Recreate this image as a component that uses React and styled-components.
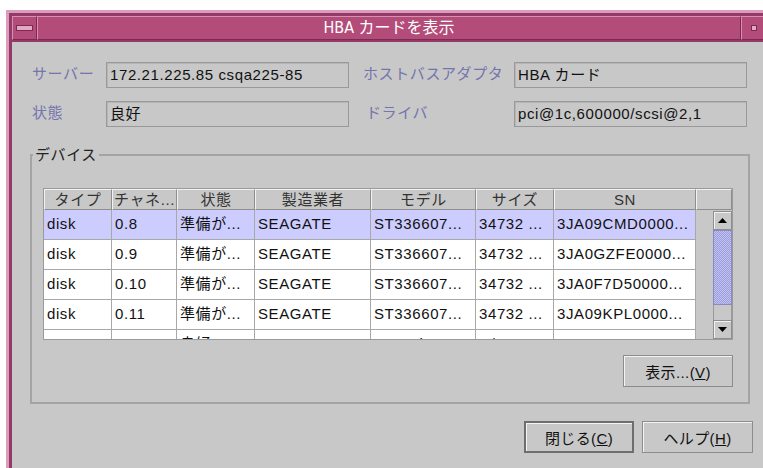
import React from 'react';
import styled, { createGlobalStyle } from 'styled-components';

const GlobalStyle = createGlobalStyle`
  html, body {
    margin: 0;
    padding: 0;
    background: #ffffff;
    overflow: hidden;
  }
  body {
    font-family: "Liberation Sans", "Noto Sans CJK JP", sans-serif;
  }
`;

// Window frame
const Frame = styled.div`
  margin: 10px 0 0 6px;
  width: 770px;
  height: 470px;
  padding: 3px 0 0 3px;
  background: #dc9cbc;
  box-sizing: border-box;
`;

const FrameInner = styled.div`
  height: 100%;
  padding: 3px 0 0 3px;
  background: #943a68;
  box-sizing: border-box;
  display: flex;
  flex-direction: column;
`;

const TitleBar = styled.div`
  display: flex;
  height: 24px;
  margin-bottom: 2px;
  background: #b34c78;
`;

const TitleButton = styled.div`
  width: ${props => props.width}px;
  box-sizing: border-box;
  display: flex;
  align-items: center;
  justify-content: ${props => props.align || 'center'};
  padding-left: ${props => props.pad || 0}px;
  border-top: 1px solid #d98fb0;
  border-left: 1px solid #d98fb0;
  border-right: 1px solid #7d2a52;
  border-bottom: 1px solid #7d2a52;
`;

const MinusIcon = styled.span`
  width: 15px;
  height: 4px;
  background: #e3a8c4;
  border: 1px solid #7d2a52;
`;

const SquareIcon = styled.span`
  width: 4px;
  height: 4px;
  background: #e3a8c4;
  border: 1px solid #7d2a52;
`;

const Title = styled.div`
  flex: 1;
  text-align: center;
  color: #ffffff;
  font-family: "DejaVu Sans Condensed", "Noto Sans CJK JP", sans-serif;
  font-size: 16px;
  line-height: 22px;
  border-top: 1px solid #d98fb0;
  border-left: 1px solid #d98fb0;
  border-right: 1px solid #7d2a52;
  border-bottom: 1px solid #7d2a52;
`;

// Content
const Content = styled.div`
  flex: 1;
  background: #c8c8c8;
  padding-top: 20px;
  display: flex;
  flex-direction: column;
  font-size: 15px;
  letter-spacing: 0.6px;
`;

const FieldGrid = styled.div`
  display: grid;
  grid-template-columns: 74px 243px 165px 233px;
  row-gap: 13px;
  margin-left: 20px;
`;

const Label = styled.div`
  color: #7474ae;
  line-height: 24px;
  height: 26px;
  padding-left: ${props => props.indent || 0}px;
  white-space: nowrap;
`;

const Field = styled.div`
  height: 26px;
  box-sizing: border-box;
  border: 1px solid #999999;
  box-shadow: inset 1px 1px 0 #b6b6b6;
  padding-left: 3px;
  line-height: 24px;
  color: #111111;
  white-space: nowrap;
  overflow: hidden;
`;

const Group = styled.fieldset`
  margin: 18px 0 0 18px;
  width: 720px;
  box-sizing: border-box;
  border: 2px solid #a4a4a4;
  padding: 23px 15px 15px 11px;
  display: flex;
  flex-direction: column;
  align-items: flex-end;
`;

const Legend = styled.legend`
  margin-left: -10px;
  padding: 0 2px;
  line-height: 20px;
  height: 20px;
  color: #222222;
`;

// Table
const Pane = styled.div`
  width: 690px;
  height: 152px;
  box-sizing: border-box;
  border: 1px solid #9a9a9a;
  display: grid;
  grid-template-columns: 1fr 19px;
  grid-template-rows: 21px 1fr;
`;

const HeaderRow = styled.div`
  grid-column: 1 / 3;
  display: flex;
`;

const HeaderCell = styled.div`
  width: ${props => props.w}px;
  flex: ${props => (props.fill ? 1 : 'none')};
  box-sizing: border-box;
  background: #c8c8c8;
  border-left: 1px solid #f2f2f2;
  border-top: 1px solid #f2f2f2;
  border-right: 1px solid #8e8e8e;
  border-bottom: 1px solid #8e8e8e;
  text-align: center;
  line-height: 19px;
  color: #333333;
  white-space: nowrap;
  overflow: hidden;
`;

const Viewport = styled.div`
  overflow: hidden;
  background: #c8c8c8;
`;

const Row = styled.div`
  display: flex;
  height: 30px;
  background: ${props => (props.selected ? '#ccccff' : '#ffffff')};
  width: 652px;
`;

const Cell = styled.div`
  width: ${props => props.w}px;
  box-sizing: border-box;
  border-right: 1px solid #a8a8a8;
  border-bottom: 1px solid #a8a8a8;
  padding-left: 3px;
  line-height: 27px;
  color: #111111;
  white-space: nowrap;
  overflow: hidden;
`;

const ScrollBar = styled.div`
  display: flex;
  flex-direction: column;
  padding-top: 1px;
  background: #c8c8c8;
`;

const ScrollButton = styled.div`
  height: 19px;
  box-sizing: border-box;
  border: 1px solid #8e8e8e;
  box-shadow: inset 1px 1px 0 #f2f2f2;
  display: flex;
  align-items: center;
  justify-content: center;
`;

const Thumb = styled.div`
  height: 75px;
  box-sizing: border-box;
  border: 1px solid #8a8ac0;
  background: repeating-conic-gradient(#c4c4f4 0 25%, #9c9cd8 0 50%) 0 0 / 2px 2px;
`;

const Track = styled.div`
  flex: 1;
  border-left: 1px solid #9a9a9a;
  border-right: 1px solid #9a9a9a;
`;

const Button = styled.button`
  width: ${props => props.w}px;
  height: 32px;
  box-sizing: border-box;
  background: #c8c8c8;
  border: ${props => (props.focused ? '2px solid #6e6e6e' : '1px solid #8c8c8c')};
  box-shadow: inset 1px 1px 0 #f4f4f4;
  font-family: "Liberation Sans", "Noto Sans CJK JP", sans-serif;
  font-size: 15px;
  letter-spacing: 0.4px;
  color: #111111;
  padding: 0;
  cursor: default;

  u {
    text-decoration: underline;
  }
`;

const ViewButton = styled(Button)`
  margin-top: 15px;
`;

const ButtonRow = styled.div`
  display: flex;
  justify-content: flex-end;
  gap: 8px;
  margin: 17px 23px 0 0;
`;

const columns = [
  { name: 'タイプ', w: 68 },
  { name: 'チャネ...', w: 65 },
  { name: '状態', w: 78 },
  { name: '製造業者', w: 116 },
  { name: 'モデル', w: 105 },
  { name: 'サイズ', w: 78 },
  { name: 'SN', w: 142 },
];

const rows = [
  ['disk', '0.8', '準備が...', 'SEAGATE', 'ST336607...', '34732 ...', '3JA09CMD0000...'],
  ['disk', '0.9', '準備が...', 'SEAGATE', 'ST336607...', '34732 ...', '3JA0GZFE0000...'],
  ['disk', '0.10', '準備が...', 'SEAGATE', 'ST336607...', '34732 ...', '3JA0F7D50000...'],
  ['disk', '0.11', '準備が...', 'SEAGATE', 'ST336607...', '34732 ...', '3JA09KPL0000...'],
  ['SES', '0.5', '良好', 'SUN', 'StorEdge...', 'N/A', '000170...'],
];

const Arrow = ({ down }) => (
  <svg width="9" height="5" viewBox="0 0 9 5">
    <path d={down ? 'M0 0 H9 L4.5 5 Z' : 'M0 5 H9 L4.5 0 Z'} fill="#000" />
  </svg>
);

const App = () => {
  return (
    <>
      <GlobalStyle />
      <Frame>
        <FrameInner>
          <TitleBar>
            <TitleButton width={25}>
              <MinusIcon />
            </TitleButton>
            <Title>HBA カードを表示</Title>
            <TitleButton width={35} align="flex-start" pad={9}>
              <SquareIcon />
            </TitleButton>
          </TitleBar>

          <Content>
            <FieldGrid>
              <Label>サーバー</Label>
              <Field>172.21.225.85 csqa225-85</Field>
              <Label indent={14}>ホストバスアダプタ</Label>
              <Field>HBA カード</Field>
              <Label>状態</Label>
              <Field>良好</Field>
              <Label indent={17}>ドライバ</Label>
              <Field>pci@1c,600000/scsi@2,1</Field>
            </FieldGrid>

            <Group>
              <Legend>デバイス</Legend>
              <Pane>
                <HeaderRow>
                  {columns.map(col => (
                    <HeaderCell key={col.name} w={col.w}>{col.name}</HeaderCell>
                  ))}
                  <HeaderCell fill />
                </HeaderRow>
                <Viewport>
                  {rows.map((row, i) => (
                    <Row key={i} selected={i === 0}>
                      {row.map((value, j) => (
                        <Cell key={j} w={columns[j].w}>{value}</Cell>
                      ))}
                    </Row>
                  ))}
                </Viewport>
                <ScrollBar>
                  <ScrollButton><Arrow /></ScrollButton>
                  <Thumb />
                  <Track />
                  <ScrollButton><Arrow down /></ScrollButton>
                </ScrollBar>
              </Pane>
              <ViewButton w={110}>表示...(<u>V</u>)</ViewButton>
            </Group>

            <ButtonRow>
              <Button w={110} focused>閉じる(<u>C</u>)</Button>
              <Button w={111}>ヘルプ(<u>H</u>)</Button>
            </ButtonRow>
          </Content>
        </FrameInner>
      </Frame>
    </>
  );
};

export default App;
